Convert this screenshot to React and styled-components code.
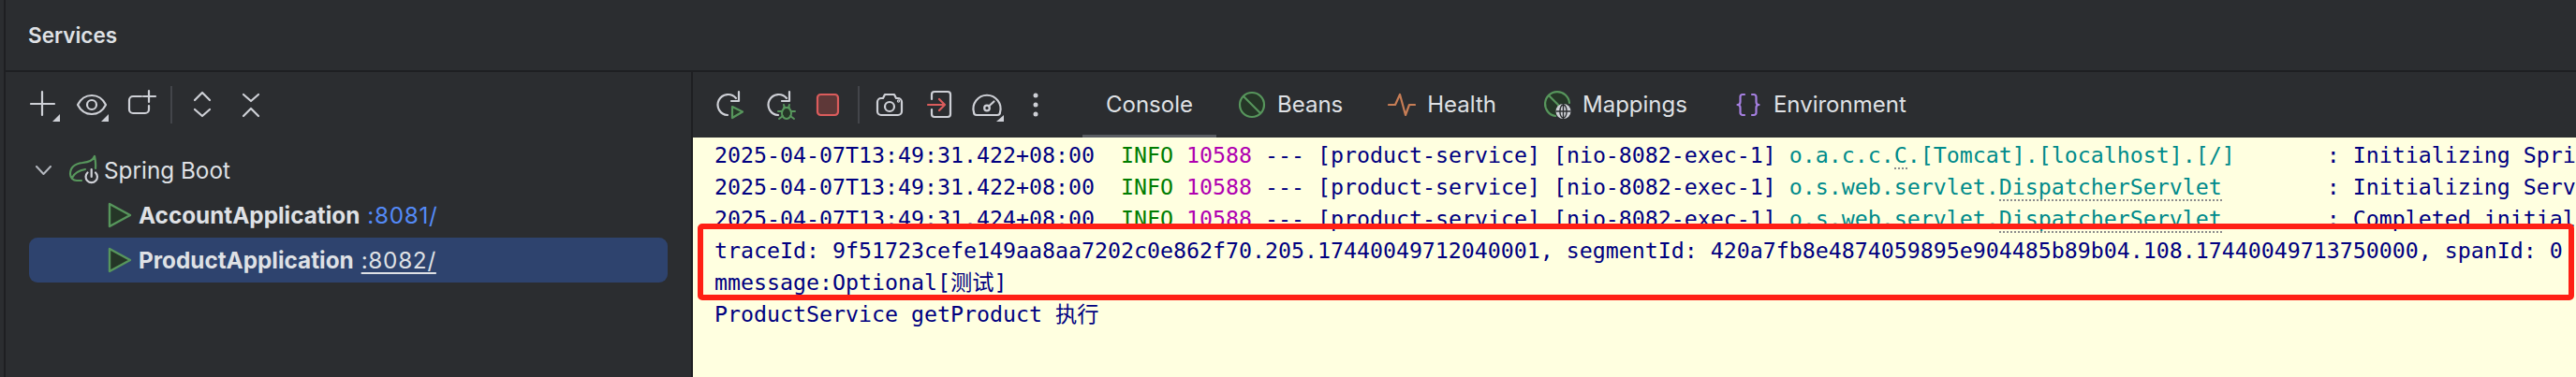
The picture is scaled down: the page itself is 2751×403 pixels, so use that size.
import React from 'react'
import styled, { createGlobalStyle } from 'styled-components'

const Reset = createGlobalStyle`
  html, body {
    margin: 0;
    padding: 0;
    background: #2b2d30;
    overflow: hidden;
  }
`

const Window = styled.div`
  width: 2751px;
  height: 403px;
  display: flex;
  background: #2b2d30;
  color: #dfe1e5;
  font-family: Inter, "Noto Sans", sans-serif;
  overflow: hidden;
`

const Rail = styled.div`
  width: 4px;
  flex: none;
  border-right: 2px solid #1e1f22;
`

const Body = styled.div`
  flex: 1;
  min-width: 0;
  display: flex;
  flex-direction: column;
`

const Header = styled.div`
  height: 75px;
  flex: none;
  display: flex;
  align-items: center;
  padding-left: 24px;
  border-bottom: 2px solid #1e1f22;
  font-size: 22.5px;
  font-weight: 600;
`

const Split = styled.div`
  flex: 1;
  min-height: 0;
  display: flex;
`

const Sidebar = styled.div`
  width: 732px;
  flex: none;
  border-right: 2px solid #1e1f22;
`

const Main = styled.div`
  flex: 1;
  min-width: 0;
  display: flex;
  flex-direction: column;
`

const Toolbar = styled.div`
  height: 70px;
  flex: none;
  display: flex;
  align-items: center;
  padding-left: ${p => p.$inset}px;
`

const ToolButton = styled.svg`
  width: 52px;
  height: 48px;
  flex: none;
  fill: none;
  stroke: #ced0d6;
  stroke-width: 2.2;
  stroke-linecap: round;
  stroke-linejoin: round;
`

const ToolSep = styled.div`
  width: 2px;
  height: 40px;
  flex: none;
  margin: 0 6px 0 ${p => p.$left}px;
  background: #43454a;
`

const Tree = styled.div`
  padding: 11px 25px 0;
  display: flex;
  flex-direction: column;
`

const TreeRow = styled.div`
  height: 48px;
  display: flex;
  align-items: center;
  padding-left: ${p => p.$indent}px;
  border-radius: 9px;
  background: ${p => (p.$selected ? '#2e436e' : 'transparent')};
  font-size: 24.3px;
`

const GroupLabel = styled.span`
  margin-left: 4px;
`

const AppName = styled.span`
  margin-left: 7px;
  font-weight: 700;
`

const Port = styled.span`
  margin-left: 8px;
  letter-spacing: 0.7px;
  color: ${p => (p.$selected ? '#dfe1e5' : '#548af7')};
  text-decoration: ${p => (p.$selected ? 'underline' : 'none')};
  text-underline-offset: 4px;
`

const Tabs = styled.div`
  display: flex;
  margin-left: 24px;
  height: 100%;
`

const Tab = styled.div`
  display: flex;
  align-items: center;
  gap: 12px;
  height: 70px;
  box-sizing: border-box;
  padding: 2px 25px 0 ${p => p.$left ?? 25}px;
  border-bottom: 3px solid ${p => (p.$active ? '#5a5d63' : 'transparent')};
  font-size: 24px;
`

const TabIcon = styled.svg`
  width: 30px;
  height: 30px;
  flex: none;
  fill: none;
  stroke-linecap: round;
  stroke-linejoin: round;
`

const Console = styled.div`
  position: relative;
  flex: 1;
  min-height: 0;
  padding: 2px 0 0 23px;
  background: #ffffe0;
  color: #000080;
  font-family: "DejaVu Sans Mono", "Noto Sans CJK SC", monospace;
  font-size: 23.25px;
  line-height: 34px;
  overflow: hidden;
`

const LogLine = styled.div`
  height: 34px;
  white-space: pre;
`

const Level = styled.span`
  color: #007d00;
`

const Pid = styled.span`
  color: #b000b0;
`

const Logger = styled.span`
  color: #008b8b;
`

const Typo = styled.span`
  border-bottom: 2px dotted #8c8c8c;
`

const Highlight = styled.div`
  position: absolute;
  left: 5px;
  top: 92px;
  width: 2004px;
  height: 82px;
  box-sizing: border-box;
  border: 6px solid #ff2015;
  border-radius: 5px;
`

const Corner = ({ x }) => (
  <path d={`M${x} 42H${x + 8}V34Z`} fill="#ced0d6" stroke="none" />
)

const PlusIcon = () => (
  <ToolButton viewBox="0 0 52 48">
    <path d="M14 23H39M26 10V35" />
    <Corner x={37} />
  </ToolButton>
)

const EyeIcon = () => (
  <ToolButton viewBox="0 0 52 48">
    <path d="M12 24C16 16 21 14 27 14S38 16 42 24C38 32 33 34 27 34S16 32 12 24Z" />
    <circle cx="27" cy="24" r="5" />
    <Corner x={37} />
  </ToolButton>
)

const NewTabIcon = () => (
  <ToolButton viewBox="0 0 52 48">
    <path d="M28 15H19A4 4 0 0 0 15 19V29A4 4 0 0 0 19 33H32A4 4 0 0 0 36 29V25" />
    <path d="M36 9V21M30 15H43" />
  </ToolButton>
)

const ExpandIcon = () => (
  <ToolButton viewBox="0 0 52 48">
    <path d="M18 19L26 11L34 19M18 29L26 36L34 29" />
  </ToolButton>
)

const CollapseIcon = () => (
  <ToolButton viewBox="0 0 52 48">
    <path d="M18 13L26 20L34 13M18 36L26 28L34 36" />
  </ToolButton>
)

const RerunIcon = () => (
  <ToolButton viewBox="0 0 52 48">
    <path d="M32 17A11 11 0 1 0 23 35" />
    <path d="M35 10V20H27" />
    <path d="M28 26L39 31.5L28 38Z" fill="#253627" stroke="#57965c" />
  </ToolButton>
)

const DebugIcon = () => (
  <ToolButton viewBox="0 0 52 48">
    <path d="M34 17A11 11 0 1 0 25 35" />
    <path d="M37 10V20H29" />
    <g stroke="#57965c" strokeWidth="2">
      <ellipse cx="34" cy="33" rx="5" ry="6" fill="#253627" />
      <path d="M31 24L32 27M37 24L36 27M31 27H37M25 31H29M43 31H39M26 39L30 36M42 39L38 36" />
    </g>
  </ToolButton>
)

const StopIcon = () => (
  <ToolButton viewBox="0 0 52 48">
    <rect x="15" y="13" width="22" height="22" rx="3.5" fill="#5e3838" stroke="#db5c5c" />
  </ToolButton>
)

const CameraIcon = () => (
  <ToolButton viewBox="0 0 52 48">
    <path d="M17 17H19L21 13H31L33 17H35A4 4 0 0 1 39 21V31A4 4 0 0 1 35 35H17A4 4 0 0 1 13 31V21A4 4 0 0 1 17 17Z" />
    <circle cx="26" cy="26" r="5" />
    <circle cx="35.5" cy="20" r="0.6" />
  </ToolButton>
)

const ExitIcon = () => (
  <ToolButton viewBox="0 0 52 48">
    <path d="M19 18V13A3 3 0 0 1 22 10H36A3 3 0 0 1 39 13V34A3 3 0 0 1 36 37H22A3 3 0 0 1 19 34V29" />
    <path d="M15 24H33M27 18L33 24L27 30" stroke="#db5c5c" />
  </ToolButton>
)

const GaugeIcon = () => (
  <ToolButton viewBox="0 0 52 48">
    <path d="M15 35H37A3 3 0 0 0 40 32A14.5 14.5 0 1 0 12 32A3 3 0 0 0 15 35Z" />
    <circle cx="26" cy="27.5" r="2.8" />
    <path d="M28 25.5L33.5 20.5" />
    <path d="M36 42H44V35Z" fill="#ced0d6" stroke="none" />
  </ToolButton>
)

const MoreIcon = () => (
  <ToolButton viewBox="0 0 52 48">
    <g fill="#ced0d6" stroke="none">
      <circle cx="26" cy="14" r="2.5" />
      <circle cx="26" cy="24" r="2.5" />
      <circle cx="26" cy="34" r="2.5" />
    </g>
  </ToolButton>
)

const Chevron = styled.svg`
  width: 17px;
  height: 10px;
  flex: none;
  fill: none;
  stroke: #b4b8bf;
  stroke-width: 2;
  stroke-linecap: round;
  stroke-linejoin: round;
`

const SpringIcon = styled.svg`
  width: 36px;
  height: 36px;
  flex: none;
  margin-left: 16px;
  fill: none;
  stroke-width: 2.2;
  stroke-linecap: round;
  stroke-linejoin: round;
`

const PlayIcon = styled.svg`
  width: 26px;
  height: 28px;
  flex: none;
`

const Play = () => (
  <PlayIcon viewBox="0 0 26 28">
    <path
      d="M2 2L24 14L2 26Z"
      fill="#253627"
      stroke="#57965c"
      strokeWidth="2.4"
      strokeLinejoin="round"
    />
  </PlayIcon>
)

const BeansGlyph = () => (
  <TabIcon viewBox="0 0 30 30">
    <circle cx="15" cy="15" r="13" fill="#253627" stroke="#57965c" strokeWidth="2.2" />
    <path d="M6 6L24 24" stroke="#57965c" strokeWidth="2.2" />
  </TabIcon>
)

const HealthGlyph = () => (
  <TabIcon viewBox="0 0 30 30">
    <path d="M1 15H8L13 4L19 26L23 15H29" stroke="#c77d55" strokeWidth="2.2" />
  </TabIcon>
)

const MappingsGlyph = () => (
  <TabIcon viewBox="0 0 30 30">
    <path d="M28 13A13 13 0 1 0 13 27" fill="#253627" stroke="#57965c" strokeWidth="2.2" />
    <path d="M6 5L18 17" stroke="#57965c" strokeWidth="2.2" />
    <circle cx="21.5" cy="22" r="8" fill="#ced0d6" />
    <g stroke="#2b2d30" strokeWidth="1.4">
      <path d="M14 22H29M21.5 14V30" />
      <ellipse cx="21.5" cy="22" rx="3.6" ry="7" />
    </g>
  </TabIcon>
)

const EnvGlyph = () => (
  <TabIcon viewBox="0 0 30 30">
    <path
      d="M11 4H9A2.5 2.5 0 0 0 6.5 6.5V12A3 3 0 0 1 3.5 15A3 3 0 0 1 6.5 18V23.5A2.5 2.5 0 0 0 9 26H11M19 4H21A2.5 2.5 0 0 1 23.5 6.5V12A3 3 0 0 0 26.5 15A3 3 0 0 0 23.5 18V23.5A2.5 2.5 0 0 1 21 26H19"
      stroke="#a57fe0"
      strokeWidth="2.2"
    />
  </TabIcon>
)

const logPrefix = ts => (
  <>
    {ts}  <Level>INFO</Level> <Pid>10588</Pid> --- [product-service] [nio-8082-exec-1]{' '}
  </>
)

const App = () => (
  <Window>
    <Reset />
    <Rail />
    <Body>
      <Header>Services</Header>
      <Split>
        <Sidebar>
          <Toolbar $inset={13}>
            <PlusIcon />
            <EyeIcon />
            <NewTabIcon />
            <ToolSep $left={7} />
            <ExpandIcon />
            <CollapseIcon />
          </Toolbar>
          <Tree>
            <TreeRow $indent={7}>
              <Chevron viewBox="0 0 17 10">
                <path d="M1 1L8.5 9L16 1" />
              </Chevron>
              <SpringIcon viewBox="0 0 36 36">
                <path
                  d="M30 3C28 8 24 9 17 10C8 11 4 16 4 22C4 26 7 29 11 29H16M30 3C31 8 31.5 12 31 16M6 26C9 20 14 18 20 17"
                  stroke="#57965c"
                />
                <path d="M22.5 20.5A6.2 6.2 0 1 0 31 20.5M26.7 17V25" stroke="#ced0d6" />
              </SpringIcon>
              <GroupLabel>Spring Boot</GroupLabel>
            </TreeRow>
            <TreeRow $indent={84}>
              <Play />
              <AppName>AccountApplication</AppName>
              <Port>:8081/</Port>
            </TreeRow>
            <TreeRow $indent={84} $selected>
              <Play />
              <AppName>ProductApplication</AppName>
              <Port $selected>:8082/</Port>
            </TreeRow>
          </Tree>
        </Sidebar>
        <Main>
          <Toolbar $inset={14}>
            <RerunIcon />
            <DebugIcon />
            <StopIcon />
            <ToolSep $left={6} />
            <CameraIcon />
            <ExitIcon />
            <GaugeIcon />
            <MoreIcon />
            <Tabs>
              <Tab $active>Console</Tab>
              <Tab $left={23}><BeansGlyph />Beans</Tab>
              <Tab $left={23}><HealthGlyph />Health</Tab>
              <Tab><MappingsGlyph />Mappings</Tab>
              <Tab><EnvGlyph />Environment</Tab>
            </Tabs>
          </Toolbar>
          <Console>
            <LogLine>
              {logPrefix('2025-04-07T13:49:31.422+08:00')}
              <Logger>o.a.c.c.<Typo>C</Typo>.[Tomcat].[localhost].[/]</Logger>
              {'       : Initializing Spring embedded WebApplicationContext'}
            </LogLine>
            <LogLine>
              {logPrefix('2025-04-07T13:49:31.422+08:00')}
              <Logger>o.s.web.servlet.<Typo>DispatcherServlet</Typo></Logger>
              {'        : Initializing Servlet \'dispatcherServlet\''}
            </LogLine>
            <LogLine>
              {logPrefix('2025-04-07T13:49:31.424+08:00')}
              <Logger>o.s.web.servlet.<Typo>DispatcherServlet</Typo></Logger>
              {'        : Completed initialization'}
            </LogLine>
            <LogLine>traceId: 9f51723cefe149aa8aa7202c0e862f70.205.17440049712040001, segmentId: 420a7fb8e4874059895e904485b89b04.108.17440049713750000, spanId: 0</LogLine>
            <LogLine>mmessage:Optional[测试]</LogLine>
            <LogLine>ProductService getProduct 执行</LogLine>
            <Highlight />
          </Console>
        </Main>
      </Split>
    </Body>
  </Window>
)

export default App
